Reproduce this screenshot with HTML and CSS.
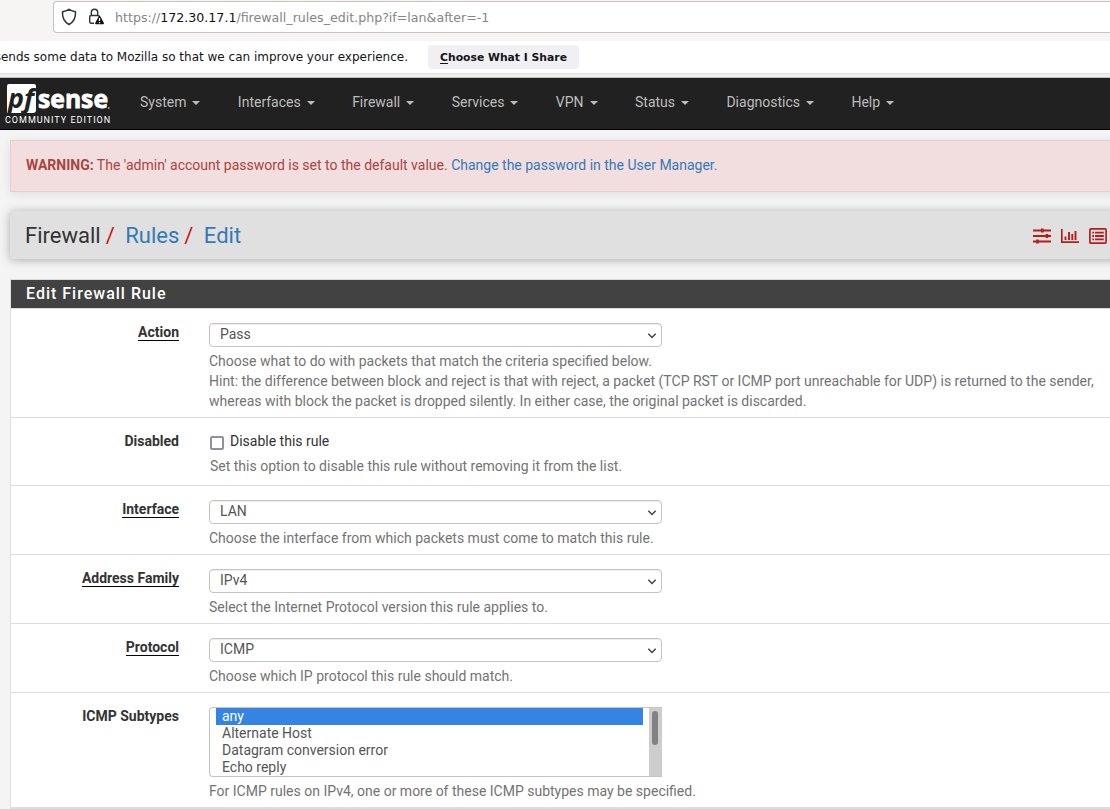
FILE: index.html
```html
<!DOCTYPE html>
<html lang="en">
<head>
<meta charset="utf-8">
<title>pfSense - Firewall: Rules: Edit</title>
<link rel="stylesheet" href="styles.css">
</head>
<body>
<header class="browser">
  <div class="toolbar">
    <div class="urlbar">
      <svg class="shield" width="16" height="18" viewBox="0 0 16 18"><path d="M8 1.2C6.2 2.8 3.8 3.3 1.5 3.8C1.2 9.500 3.200 14 8 16.500C12.800 14 14.800 9.500 14.500 3.800C12.200 3.300 9.800 2.800 8 1.200Z" fill="none" stroke="#333" stroke-width="1.5" stroke-linejoin="round"/></svg>
      <svg class="lock" width="17" height="18" viewBox="0 0 17 18"><path d="M6 15.300H3.200Q1.700 15.300 1.700 13.800V9Q1.700 7.500 3.200 7.500H9.800Q11.300 7.500 11.300 8.500M3.300 7.500V4.400Q3.300 1.200 6.500 1.200T9.700 4.400V7.500" fill="none" stroke="#333" stroke-width="1.4"/><path d="M11.500 7.800Q12.100 7.800 12.500 8.700L15.900 15Q16.200 16.300 15 16.300H8Q6.800 16.300 7.200 15L10.500 8.700Q10.900 7.800 11.500 7.800Z" fill="#111"/><path d="M11.500 10V13M11.500 14V15.200" stroke="#fff" stroke-width="1.300"/></svg>
      <span class="url">https://<b>172.30.17.1</b>/firewall_rules_edit.php?if=lan&amp;after=-1</span>
    </div>
  </div>
  <div class="notice">
    <span class="notice-text">sends some data to Mozilla so that we can improve your experience.</span>
    <button class="share"><u>C</u>hoose What I Share</button>
  </div>
  <div class="edge"></div>
</header>

<nav class="navbar">
  <a class="brand">
    <svg width="106" height="31" viewBox="0 0 106 31">
      <path d="M4 1H29Q31 1 31 3V27Q31 30 28 30H2V3Q2 1 4 1Z" fill="#fff"/>
      <text x="3" y="24.500" class="logo-pf" textLength="26" lengthAdjust="spacingAndGlyphs">pf</text>
      <text x="33" y="24.800" class="logo-sense" textLength="70" lengthAdjust="spacingAndGlyphs">sense</text>
      <circle cx="103.800" cy="25" r="1" fill="#999"/>
    </svg>
    <span class="edition">COMMUNITY EDITION</span>
  </a>
  <ul class="menu">
    <li>System</li><li>Interfaces</li><li>Firewall</li><li>Services</li><li>VPN</li><li>Status</li><li>Diagnostics</li><li>Help</li>
  </ul>
</nav>

<main class="page">
  <div class="alert"><strong>WARNING:</strong> The 'admin' account password is set to the default value. <a>Change the password in the User Manager.</a></div>

  <div class="crumbs">
    <div class="trail"><span>Firewall</span><i>/</i><a>Rules</a><i>/</i><a>Edit</a></div>
    <div class="tools">
      <svg width="18" height="18" viewBox="0 0 18 18"><path d="M0 3.500H18M0 9H18M0 14.500H18" stroke="#b71c1c" stroke-width="2"/><path d="M9.300 1.500V5.500M14 7V11M4.500 12.500V16.500" stroke="#b71c1c" stroke-width="2.600"/></svg>
      <svg width="18" height="18" viewBox="0 0 18 18"><path d="M.8 2V15.200H18" fill="none" stroke="#b71c1c" stroke-width="1.700"/><path d="M4.500 9.500V13M8 5V13M11.300 7V13M14.500 4V13" stroke="#b71c1c" stroke-width="1.900"/></svg>
      <svg width="18" height="18" viewBox="0 0 18 18"><rect x=".9" y="1.900" width="16.200" height="14.200" rx="1" fill="none" stroke="#b71c1c" stroke-width="1.700"/><path d="M3.300 5.700H5M3.300 9H5M3.300 12.400H5M6 5.700H14.800M6 9H14.800M6 12.400H14.800" stroke="#b71c1c" stroke-width="1.800"/></svg>
    </div>
  </div>

  <section class="panel">
    <h2>Edit Firewall Rule</h2>
    <div class="row">
      <div class="label"><span class="req">Action</span></div>
      <div class="field"><div class="select">Pass<svg width="10" height="6" viewBox="0 0 10 6"><path d="M1.300 .8L5 4.500L8.700 .8"/></svg></div>
        <p>Choose what to do with packets that match the criteria specified below.<br>Hint: the difference between block and reject is that with reject, a packet (TCP RST or ICMP port unreachable for UDP) is returned to the sender,<br>whereas with block the packet is dropped silently. In either case, the original packet is discarded.</p></div>
    </div>
    <div class="row check-row">
      <div class="label"><span>Disabled</span></div>
      <div class="field"><div class="check"><span class="box"></span>Disable this rule</div>
        <p>Set this option to disable this rule without removing it from the list.</p></div>
    </div>
    <div class="row">
      <div class="label"><span class="req">Interface</span></div>
      <div class="field"><div class="select">LAN<svg width="10" height="6" viewBox="0 0 10 6"><path d="M1.300 .8L5 4.500L8.700 .8"/></svg></div>
        <p>Choose the interface from which packets must come to match this rule.</p></div>
    </div>
    <div class="row">
      <div class="label"><span class="req">Address Family</span></div>
      <div class="field"><div class="select">IPv4<svg width="10" height="6" viewBox="0 0 10 6"><path d="M1.300 .8L5 4.500L8.700 .8"/></svg></div>
        <p>Select the Internet Protocol version this rule applies to.</p></div>
    </div>
    <div class="row">
      <div class="label"><span class="req">Protocol</span></div>
      <div class="field"><div class="select">ICMP<svg width="10" height="6" viewBox="0 0 10 6"><path d="M1.300 .8L5 4.500L8.700 .8"/></svg></div>
        <p>Choose which IP protocol this rule should match.</p></div>
    </div>
    <div class="row last">
      <div class="label"><span>ICMP Subtypes</span></div>
      <div class="field"><div class="listbox"><ul><li class="selected">any</li><li>Alternate Host</li><li>Datagram conversion error</li><li>Echo reply</li></ul><div class="scrollbar"><div class="thumb"></div></div></div>
        <p>For ICMP rules on IPv4, one or more of these ICMP subtypes may be specified.</p></div>
    </div>
  </section>
</main>
</body>
</html>
```
FILE: styles.css
```css
* { box-sizing: border-box; }
body { margin: 0; height: 809px; overflow: hidden; background: #f4f4f4; color: #333; font: 14px/20px Roboto, sans-serif; }
ul, p, h2 { margin: 0; padding: 0; list-style: none; }
a { color: #337ab7; }

.browser { font-family: "DejaVu Sans", sans-serif; }
.toolbar { height: 41px; padding: 1px 0 0 53px; background: #f6f5f3; }
.urlbar { display: flex; align-items: center; height: 32px; padding-left: 7px; background: #fff; border: 1px solid #c9c4be; border-right: 0; border-radius: 4px 0 0 4px; }
.lock { margin-left: 11px; }
.url { margin-left: 10px; padding-top: 1px; font-size: 12.62px; color: #858585; white-space: nowrap; }
.url b { font-weight: 400; color: #111; }
.notice { display: flex; align-items: center; height: 32px; background: #fff; overflow: hidden; }
.notice-text { width: 408px; margin-right: 20px; display: flex; justify-content: flex-end; font-size: 12px; color: #15141a; white-space: nowrap; }
.share { width: 151px; height: 24px; padding: 1px 0 0; border: 0; border-radius: 4px; background: #f0f0f2; color: #15141a; font: bold 10.8px/23px "DejaVu Sans", sans-serif; white-space: nowrap; }
.share u { text-underline-offset: 2px; }
.edge { height: 5px; background: #efeff0; border-top: 1px solid #e3e3e5; border-bottom: 1px solid #c5c0bb; }

.navbar { display: flex; height: 52px; background: #212121; border-bottom: 1px solid #000; }
.brand { width: 140px; padding: 5px 0 0 5px; color: #fff; }
.brand svg { display: block; }
.logo-pf { font: italic bold 27px "Open Sans", sans-serif; fill: #212121; }
.logo-sense { font: bold 25px "Open Sans", sans-serif; fill: #fff; stroke: #fff; stroke-width: .8px; }
.edition { display: block; padding-top: 1px; font-size: 9px; line-height: 11px; letter-spacing: 1px; white-space: nowrap; }
.menu { display: flex; gap: 37.42px; padding-top: 14px; color: #bdbdbd; }
.menu li { display: flex; align-items: center; height: 20px; }
.menu li::after { content: ""; margin: 2px 0 0 6px; border: 4px solid transparent; border-top-color: #bdbdbd; border-bottom: 0; }

.page { padding: 10px 0 0 10px; }
.alert { margin-right: -100px; height: 52px; padding: 14px 15px; background: #f2dede; border: 1px solid #ebccd1; color: #a94442; box-shadow: 0 2px 10px rgba(0,0,0,.09); }
.crumbs { display: flex; justify-content: space-between; align-items: center; height: 48px; margin: 19px -100px 0 0; padding: 0 103px 0 15px; border-radius: 3px; background: #e0e0e0; box-shadow: 0 1px 10px rgba(0,0,0,.3); }
.trail { display: flex; align-items: center; padding-top: 2px; font-size: 22px; line-height: 30px; }
.trail i { margin: 0 10.500px 0 5px; color: #c31818; font-style: normal; }
.tools { display: flex; gap: 10px; padding-top: 2px; }
.tools svg { display: block; }
.panel { margin: 20px -100px 0 0; background: #fff; border: 1px solid #ddd; }
.panel h2 { height: 29px; padding: 3px 15px; background: #424242; border-bottom: 1px solid #ddd; color: #fff; font: 500 16px/21px Roboto, sans-serif; letter-spacing: 1px; }
.row { display: grid; grid-template-columns: 168px 1fr; column-gap: 30px; padding: 14px 0 6px; border-bottom: 1px solid #ddd; }
.label { margin-top: -1px; text-align: right; font-weight: 700; }
.label span { display: inline-block; height: 19px; }
.label .req { border-bottom: 1px solid #000; }
.field p { margin-top: 4px; color: #737373; white-space: nowrap; }
.select { display: flex; justify-content: space-between; align-items: center; width: 453px; height: 24px; padding: 0 4px 2px 10px; border: 1px solid #c4c4c4; border-radius: 4px; background: #fff; color: #555; box-shadow: inset 0 1px 1px rgba(0,0,0,.075); }
.select svg { margin-top: 3px; fill: none; stroke: #444; stroke-width: 1.5; }
.check-row { padding: 13px 0 9px; }
.check-row .label { margin-top: 0; }
.check-row p { margin: 5px 0 0 1px; }
.check { display: flex; align-items: center; height: 20px; }
.box { width: 14px; height: 14px; margin: 4px 6px 0 1px; border: 2px solid #8f8f9d; border-radius: 2px; background: #fff; }
.listbox { display: flex; width: 453px; height: 70px; padding-left: 6px; border: 1px solid #c4c4c4; border-right: 0; border-radius: 4px 0 0 4px; color: #555; overflow: hidden; }
.listbox ul { width: 427px; margin-right: 6px; }
.listbox li { height: 17px; padding-left: 6px; line-height: 17px; }
.listbox .selected { background: #3584e4; color: #fff; }
.scrollbar { width: 13px; height: 68px; padding: 3px; background: #cdcdcd; }
.thumb { width: 6px; height: 34px; border-radius: 3px; background: #7f8383; }
.last { border-bottom-width: 2px; }
```
